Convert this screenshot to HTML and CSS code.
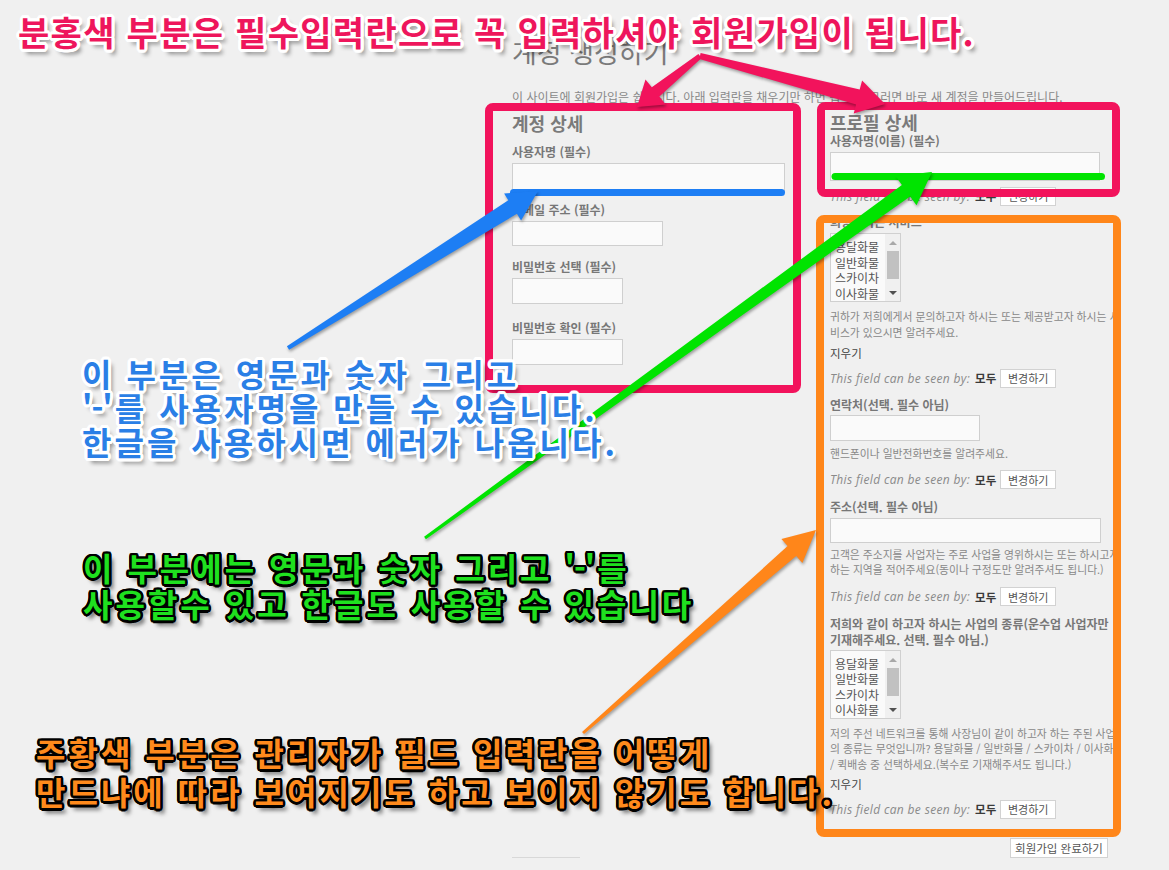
FILE: index.html
```html
<!DOCTYPE html>
<html lang="ko">
<head>
<meta charset="utf-8">
<title>계정 생성하기</title>
<link rel="stylesheet" href="styles.css">
</head>
<body>
<div class="page">
  <h1 class="title">계정 생성하기</h1>
  <p class="intro">이 사이트에 회원가입은 쉽습니다. 아래 입력란을 채우기만 하면 됩니다. 그러면 바로 새 계정을 만들어드립니다.</p>
  <div class="cols">
    <div class="col col-left">
      <h2 class="sec">계정 상세</h2>
      <div class="lbl mt11">사용자명 (필수)</div>
      <input class="inp w273 h29" type="text">
      <div class="lbl mt10">이메일 주소 (필수)</div>
      <input class="inp w151 h25" type="text">
      <div class="lbl mt13">비밀번호 선택 (필수)</div>
      <input class="inp w111 h26" type="password">
      <div class="lbl mt16">비밀번호 확인 (필수)</div>
      <input class="inp w111 h26" type="password">
    </div>
    <div class="col col-right">
      <h2 class="sec sec-r">프로필 상세</h2>
      <div class="lbl mt1">사용자명(이름) (필수)</div>
      <input class="inp w270 h29" type="text">
      <div class="vis mt6"><span class="vis-txt">This field can be seen by:</span><span class="vis-who">모두</span><span class="btn">변경하기</span></div>

      <div class="lbl mt9">희망하시는 서비스</div>
      <div class="msel mt3">
        <ul class="msel-list"><li>용달화물</li><li>일반화물</li><li>스카이차</li><li>이사화물</li></ul>
        <div class="msel-bar"><span class="arr-up"></span><span class="thumb"></span><span class="arr-down"></span></div>
      </div>
      <p class="desc mt7">귀하가 저희에게서 문의하고자 하시는 또는 제공받고자 하시는 서<br>비스가 있으시면 알려주세요.</p>
      <div class="clear mt5">지우기</div>
      <div class="vis mt8"><span class="vis-txt">This field can be seen by:</span><span class="vis-who">모두</span><span class="btn">변경하기</span></div>

      <div class="lbl mt10">연락처(선택. 필수 아님)</div>
      <input class="inp w150 h26 mt2" type="text">
      <p class="desc mt5">핸드폰이나 일반전화번호를 알려주세요.</p>
      <div class="vis mt9"><span class="vis-txt">This field can be seen by:</span><span class="vis-who">모두</span><span class="btn">변경하기</span></div>

      <div class="lbl mt10">주소(선택. 필수 아님)</div>
      <input class="inp w271 h25" type="text">
      <p class="desc mt4">고객은 주소지를 사업자는 주로 사업을 영위하시는 또는 하시고자<br>하는 지역을 적어주세요(동이나 구정도만 알려주셔도 됩니다.)</p>
      <div class="vis mt10"><span class="vis-txt">This field can be seen by:</span><span class="vis-who">모두</span><span class="btn">변경하기</span></div>

      <div class="lbl lbl-clip mt10">저희와 같이 하고자 하시는 사업의 종류(운수업 사업자만<br>기재해주세요. 선택. 필수 아님.)</div>
      <div class="msel mt2">
        <ul class="msel-list"><li>용달화물</li><li>일반화물</li><li>스카이차</li><li>이사화물</li></ul>
        <div class="msel-bar"><span class="arr-up"></span><span class="thumb"></span><span class="arr-down"></span></div>
      </div>
      <p class="desc mt7">저의 주선 네트워크를 통해 사장님이 같이 하고자 하는 주된 사업<br>의 종류는 무엇입니까? 용달화물 / 일반화물 / 스카이차 / 이사화물<br>/ 퀵배송 중 선택하세요.(복수로 기재해주셔도 됩니다.)</p>
      <div class="clear mt4">지우기</div>
      <div class="vis mt8"><span class="vis-txt">This field can be seen by:</span><span class="vis-who">모두</span><span class="btn">변경하기</span></div>
    </div>
  </div>
  <div class="submit-row">
    <span class="rule"></span>
    <span class="btn btn-submit">회원가입 완료하기</span>
  </div>
</div>

<svg class="overlay" width="1169" height="870" viewBox="0 0 1169 870" xmlns="http://www.w3.org/2000/svg">
  <rect class="box-pink" x="489" y="107" width="308" height="282" rx="4"/>
  <rect class="box-pink" x="821" y="106" width="295" height="87" rx="4"/>
  <rect class="box-orange" x="820" y="219" width="297" height="614" rx="4"/>
  <line class="ln-blue" x1="513.5" y1="192.5" x2="781.5" y2="192.5"/>
  <line class="ln-green" x1="835" y1="176.5" x2="1101.5" y2="176.5"/>
  <polygon class="arw arw-pink" points="698.4,54 651.8,87.2 645.5,79.4 637,107 665.7,104.4 659.4,96.6 701.6,58"/>
  <polygon class="arw arw-pink" points="699.4,58.9 856.1,104.5 853.7,113.4 885,104 862.1,80.6 859.7,89.5 700.6,53.1"/>
  <polygon class="arw arw-blue" points="289.1,349.7 516.9,213.8 521.1,220.6 538,191 504.1,193.4 508.3,200.2 286.9,346.3"/>
  <polygon class="arw arw-green" points="425.9,539.2 910.1,196.4 916.5,205.3 932,172 895.5,176.1 901.9,185 424.1,536.8"/>
  <polygon class="arw arw-orange" points="584,734.1 796.2,555.9 802.4,563.1 816,530 781.4,538.9 787.6,546.1 582,731.9"/>
</svg>

<div class="note note-pink">분홍색 부분은 필수입력란으로 꼭 입력하셔야 회원가입이 됩니다.</div>
<div class="note note-blue">이 부분은 영문과 숫자 그리고<br><span class="q">'-'</span>를 사용자명을 만들 수 있습니다.<br>한글을 사용하시면 에러가 나옵니다.</div>
<div class="note note-green">이 부분에는 영문과 숫자 그리고 <span class="q">'-'</span>를<br>사용할수 있고 한글도 사용할 수 있습니다</div>
<div class="note note-orange">주황색 부분은 관리자가 필드 입력란을 어떻게<br>만드냐에 따라 보여지기도 하고 보이지 않기도 합니다.</div>
</body>
</html>
```

FILE: styles.css
```css
* { box-sizing: border-box; }
html, body { margin: 0; padding: 0; }
body {
  width: 1169px;
  height: 870px;
  overflow: hidden;
  position: relative;
  background: #f0f0f0;
  font-family: "Noto Sans CJK KR", "Noto Sans", sans-serif;
  color: #666;
}
.page { padding: 37px 0 0 512px; }
.title {
  margin: 0;
  font-size: 27px;
  line-height: 30px;
  font-weight: 400;
  color: #7a7a7a;
}
.intro {
  margin: 22px 0 0;
  font-size: 12px;
  line-height: 16px;
  color: #888;
  white-space: nowrap;
}
.cols { display: flex; gap: 45px; align-items: flex-start; }
.col { display: flex; flex-direction: column; align-items: flex-start; }
.col-left { width: 273px; }
.col-right { width: 291px; }
.sec {
  margin: 8px 0 0;
  font-size: 18px;
  line-height: 20px;
  font-weight: 700;
  color: #7a7a7a;
}
.sec-r { margin-top: 7px; }
.lbl {
  font-size: 12px;
  line-height: 16px;
  font-weight: 700;
  color: #777;
  white-space: nowrap;
}
.lbl-clip { width: 100%; overflow: hidden; }
.inp {
  display: block;
  margin: 3px 0 0;
  padding: 0;
  border: 1px solid #cfcfcf;
  background: #fafafa;
  outline: none;
}
.w273 { width: 273px; } .w270 { width: 270px; } .w271 { width: 271px; }
.w151 { width: 151px; } .w150 { width: 150px; } .w111 { width: 111px; }
.h29 { height: 29px; } .h26 { height: 26px; } .h25 { height: 25px; }
.mt1 { margin-top: 1px; } .mt2 { margin-top: 2px; } .mt3 { margin-top: 3px; }
.mt4 { margin-top: 4px; } .mt5 { margin-top: 5px; } .mt6 { margin-top: 6px; }
.mt7 { margin-top: 7px; } .mt8 { margin-top: 8px; } .mt9 { margin-top: 9px; }
.mt10 { margin-top: 10px; } .mt11 { margin-top: 11px; } .mt13 { margin-top: 13px; }
.mt16 { margin-top: 16px; }

.vis {
  display: flex;
  align-items: center;
  gap: 4px;
  height: 18px;
}
.vis-txt {
  font-family: "Open Sans", "Noto Sans", sans-serif;
  font-style: italic;
  font-size: 12px;
  letter-spacing: 0.35px;
  color: #8a8a8a;
  white-space: nowrap;
}
.vis-who { font-size: 11.5px; font-weight: 700; color: #3a3a3a; margin-left: 1px; }
.btn {
  display: inline-flex;
  align-items: center;
  justify-content: center;
  height: 19px;
  padding: 0 6px;
  background: #fff;
  border: 1px solid #d2d2d2;
  font-size: 11px;
  color: #555;
  white-space: nowrap;
}
.vis .btn { width: 56px; }

.msel {
  display: flex;
  width: 71px;
  height: 69px;
  border: 1px solid #d0d0d0;
  background: #fafafa;
}
.msel-list {
  flex: 1;
  list-style: none;
  margin: 0;
  padding: 5px 0 0 4px;
  font-size: 12px;
  line-height: 15.5px;
  color: #555;
  overflow: hidden;
  white-space: nowrap;
}
.msel-bar {
  width: 15px;
  flex: none;
  display: flex;
  flex-direction: column;
  align-items: center;
  padding-top: 7px;
  background: #f0f0f0;
}
.arr-up {
  width: 0; height: 0;
  border-left: 4px solid transparent;
  border-right: 4px solid transparent;
  border-bottom: 4px solid #a8a8a8;
}
.thumb { width: 12px; height: 28px; margin-top: 6px; background: #c1c1c1; }
.arr-down {
  width: 0; height: 0;
  margin-top: 12px;
  border-left: 4px solid transparent;
  border-right: 4px solid transparent;
  border-top: 4px solid #505050;
}
.desc {
  width: 100%;
  margin-bottom: 0;
  font-size: 10.8px;
  line-height: 15.5px;
  color: #888;
  white-space: nowrap;
  overflow: hidden;
}
.clear { font-size: 11.5px; line-height: 16px; color: #444; }

.submit-row {
  display: flex;
  justify-content: space-between;
  align-items: flex-end;
  width: 596px;
  margin-top: 20px;
}
.rule { display: block; width: 68px; height: 1px; background: #d8d8d8; }
.btn-submit { height: 20px; width: 98px; font-size: 11.5px; }

.overlay { position: absolute; left: 0; top: 0; }
.box-pink { fill: none; stroke: #f2135c; stroke-width: 8; }
.box-orange { fill: none; stroke: #ff861a; stroke-width: 8; }
.ln-blue { stroke: #1d7ef4; stroke-width: 7; stroke-linecap: round; }
.ln-green { stroke: #00e400; stroke-width: 7; stroke-linecap: round; }
.arw { filter: drop-shadow(1px 2px 1.5px rgba(0,0,0,0.35)); }
.arw-pink { fill: #f2135c; }
.arw-blue { fill: #1d7ef4; }
.arw-green { fill: #00e400; }
.arw-orange { fill: #ff861a; }

.note {
  position: absolute;
  white-space: nowrap;
  font-family: "Noto Sans CJK KR", sans-serif;
  font-weight: 700;
  font-size: 32px;
  letter-spacing: 3px;
}
.note .q { letter-spacing: -1px; margin-right: 3px; }
.note-pink, .note-blue {
  text-shadow:
    3px 0 #fff, -3px 0 #fff, 0 3px #fff, 0 -3px #fff,
    2.1px 2.1px #fff, -2.1px 2.1px #fff, 2.1px -2.1px #fff, -2.1px -2.1px #fff,
    2.8px 1.2px #fff, -2.8px 1.2px #fff, 2.8px -1.2px #fff, -2.8px -1.2px #fff,
    1.2px 2.8px #fff, -1.2px 2.8px #fff, 1.2px -2.8px #fff, -1.2px -2.8px #fff,
    4px 5px 4px rgba(0,0,0,0.45);
}
.note-green, .note-orange {
  text-shadow:
    2.5px 0 #000, -2.5px 0 #000, 0 2.5px #000, 0 -2.5px #000,
    1.8px 1.8px #000, -1.8px 1.8px #000, 1.8px -1.8px #000, -1.8px -1.8px #000,
    2.3px 1px #000, -2.3px 1px #000, 2.3px -1px #000, -2.3px -1px #000,
    1px 2.3px #000, -1px 2.3px #000, 1px -2.3px #000, -1px -2.3px #000,
    4px 5px 4px rgba(0,0,0,0.6);
}
.note-pink {
  left: 18px; top: 12px;
  font-size: 34px; line-height: 40px;
  letter-spacing: 1.3px;
  color: #ee165c;
}
.note-blue {
  left: 82px; top: 356px;
  line-height: 34px;
  color: #2a7fe6;
}
.note-green {
  left: 83px; top: 549px;
  line-height: 36px;
  color: #1fe01f;
}
.note-orange {
  left: 36px; top: 733px;
  line-height: 39px;
  color: #ff8a1c;
}
```
